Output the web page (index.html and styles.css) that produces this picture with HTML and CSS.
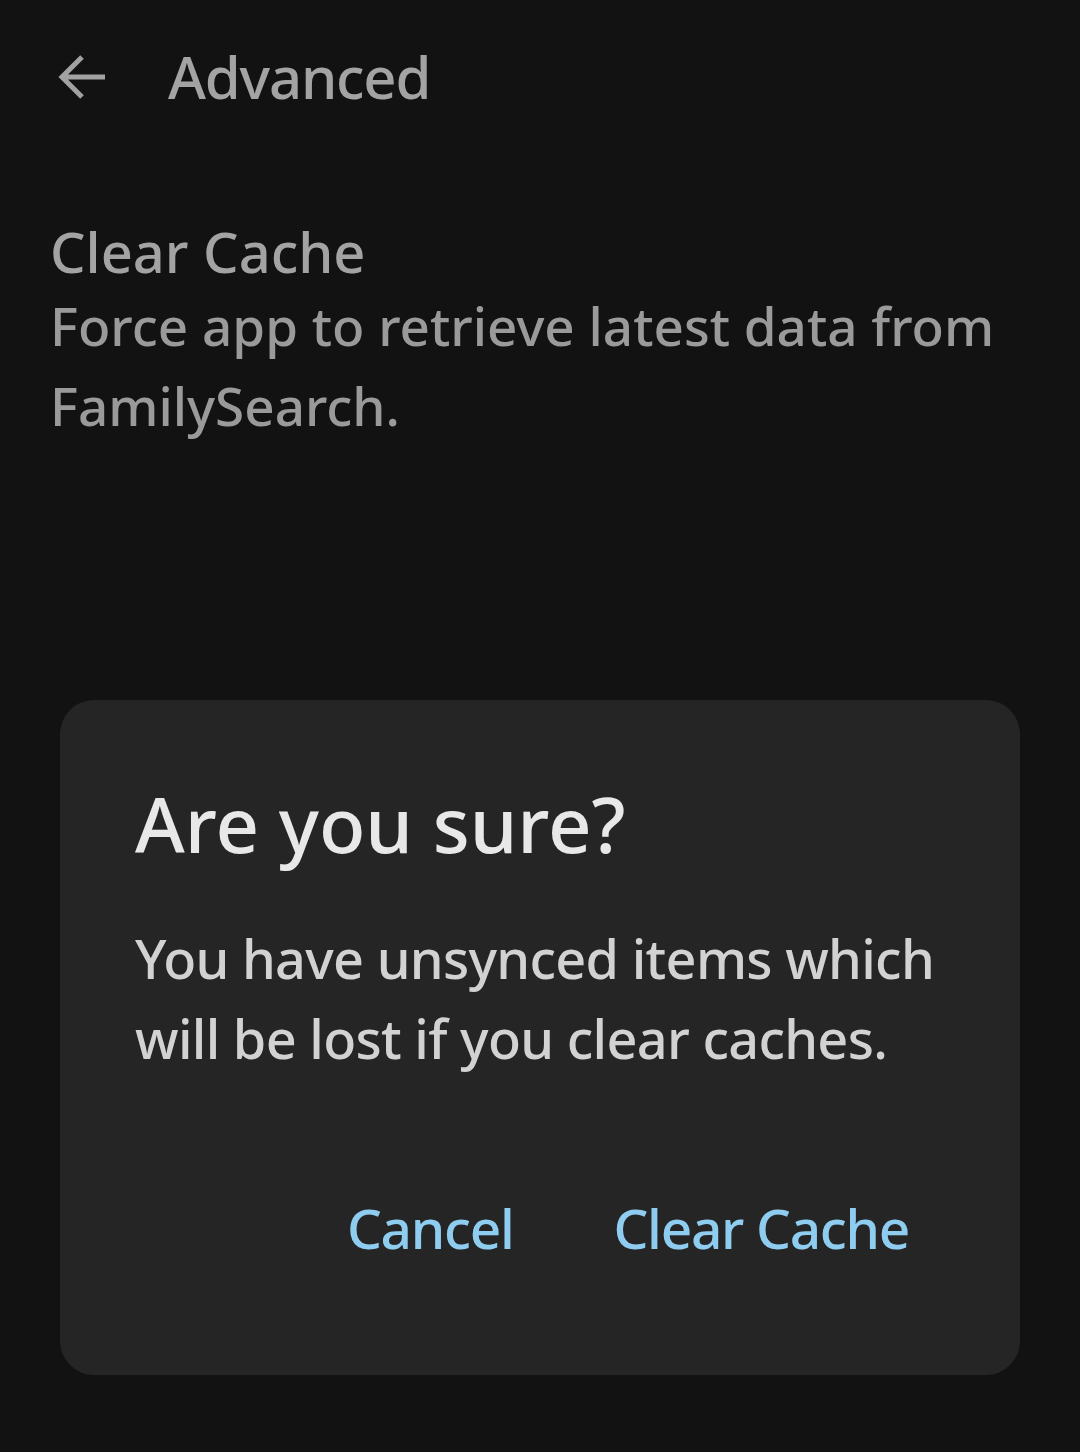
FILE: index.html
```html
<!DOCTYPE html>
<html>
<head>
<meta charset="utf-8">
<link rel="stylesheet" href="styles.css">
</head>
<body>
<div class="screen">
  <header class="appbar">
    <svg class="back" viewBox="0 0 50 50" width="50" height="50">
      <path d="M47 25 H5 M24 5 L4 25 L24 45" fill="none" stroke="#a2a2a2" stroke-width="5" stroke-linecap="butt" stroke-linejoin="miter"/>
    </svg>
    <h1 class="title">Advanced</h1>
  </header>
  <section class="pref">
    <div class="pref-title">Clear Cache</div>
    <div class="pref-summary">Force app to retrieve latest data from FamilySearch.</div>
  </section>
  <div class="dialog">
    <div class="dialog-title">Are you sure?</div>
    <div class="dialog-body">You have unsynced items which will be lost if you clear caches.</div>
    <div class="dialog-actions">
      <span class="btn">Cancel</span>
      <span class="btn">Clear Cache</span>
    </div>
  </div>
</div>
</body>
</html>
```
FILE: styles.css
```css
html, body {
  margin: 0;
  padding: 0;
  background: #121212;
}
body {
  font-family: "Noto Sans", "Open Sans", sans-serif;
  width: 1080px;
  height: 1452px;
  overflow: hidden;
}
.screen {
  display: flex;
  flex-direction: column;
  padding: 0 60px;
}
.appbar {
  display: flex;
  align-items: center;
  height: 156px;
  margin-left: -2px;
}
.back {
  margin-top: -2px;
}
.title {
  margin: -4px 0 0 60px;
  font-size: 58px;
  font-weight: 500;
  color: #a3a3a3;
  letter-spacing: -1.2px;
}
.pref {
  margin-left: -10px;
  padding-top: 60px;
}
.pref-title {
  font-size: 56px;
  font-weight: 500;
  color: #a3a3a3;
  line-height: 70px;
  letter-spacing: 0px;
}
.pref-summary {
  font-size: 53px;
  font-weight: 500;
  color: #9a9a9a;
  line-height: 80px;
  letter-spacing: 0px;
  width: 990px;
}
.dialog {
  margin-top: 254px;
  background: #252525;
  border-radius: 34px;
  height: 675px;
  padding: 74px 75px 0 75px;
  box-sizing: border-box;
  display: flex;
  flex-direction: column;
}
.dialog-title {
  font-size: 76px;
  font-weight: 500;
  color: #e8e8e8;
  line-height: 100px;
  letter-spacing: 0px;
}
.dialog-body {
  margin-top: 44px;
  font-size: 54px;
  font-weight: 500;
  color: #d2d2d2;
  line-height: 80px;
  letter-spacing: -0.7px;
}
.dialog-actions {
  margin-top: 112px;
  display: flex;
  justify-content: flex-end;
  gap: 100px;
  padding-right: 36px;
}
.btn {
  font-size: 55px;
  font-weight: 500;
  color: #8fcdf0;
  letter-spacing: -1.3px;
}
```
